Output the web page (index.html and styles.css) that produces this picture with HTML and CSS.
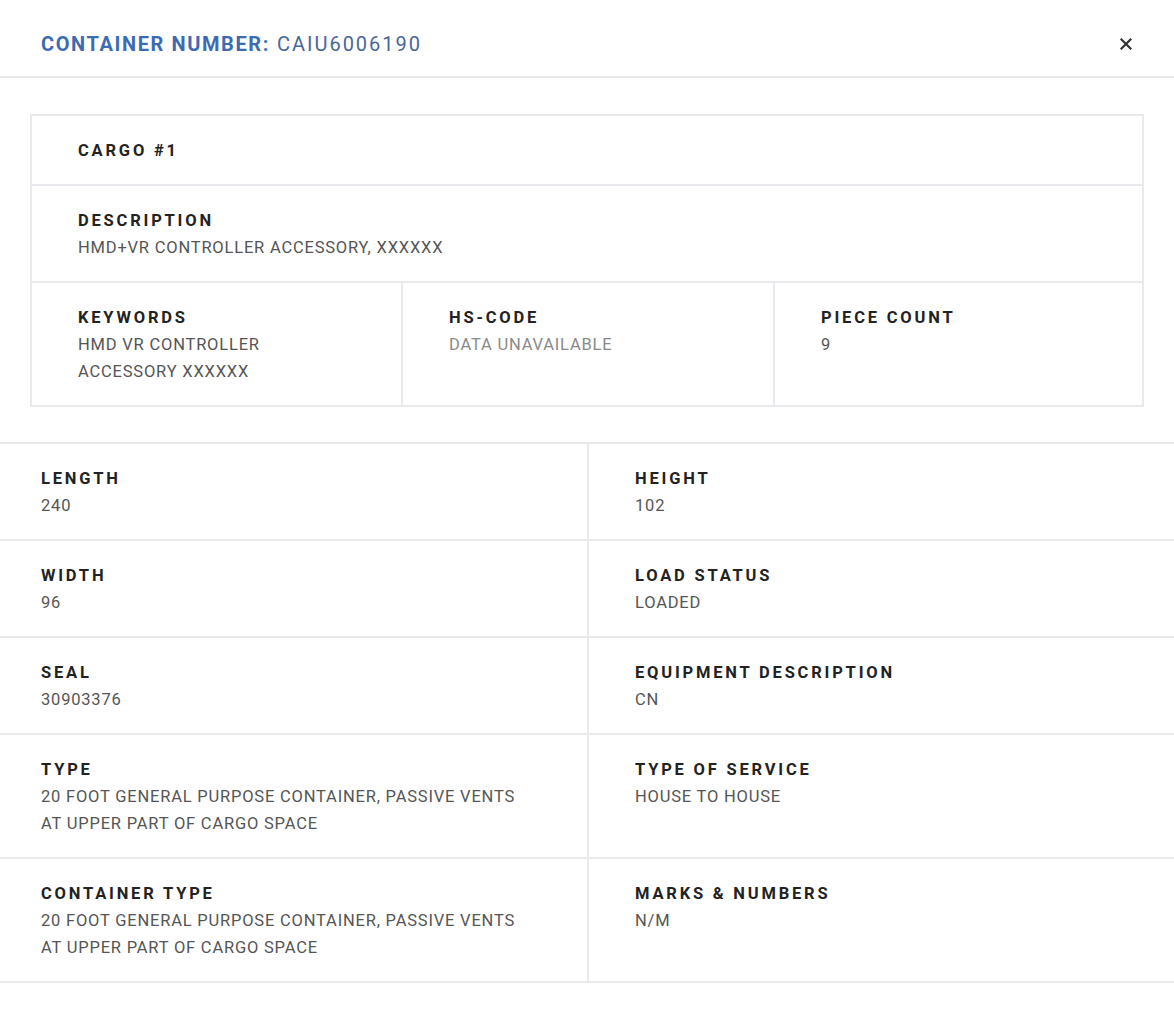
FILE: index.html
```html
<!DOCTYPE html>
<html lang="en">
<head>
    <meta charset="UTF-8">
    <meta name="viewport" content="width=device-width, initial-scale=1.0">
    <title>Container CAIU6006190</title>
    <link rel="stylesheet" href="styles.css">
</head>
<body>
    <div class="modal">
        <div class="modal-header">
            <div class="modal-title"><b>CONTAINER NUMBER:</b> CAIU6006190</div>
            <button class="close" type="button">
                <svg width="12" height="12" viewBox="0 0 12 12"><path d="M1.5 1.5l9 9M10.5 1.5l-9 9" stroke="#333" stroke-width="2.2" stroke-linecap="square"/></svg>
            </button>
        </div>

        <div class="cargo">
            <div class="cargo-row">
                <div class="cell">
                    <div class="label">CARGO #1</div>
                </div>
            </div>
            <div class="cargo-row">
                <div class="cell">
                    <div class="label">DESCRIPTION</div>
                    <div class="value">HMD+VR CONTROLLER ACCESSORY, XXXXXX</div>
                </div>
            </div>
            <div class="cargo-row thirds">
                <div class="cell">
                    <div class="label">KEYWORDS</div>
                    <div class="value">HMD VR CONTROLLER ACCESSORY XXXXXX</div>
                </div>
                <div class="cell">
                    <div class="label">HS-CODE</div>
                    <div class="value muted">DATA UNAVAILABLE</div>
                </div>
                <div class="cell">
                    <div class="label">PIECE COUNT</div>
                    <div class="value">9</div>
                </div>
            </div>
        </div>

        <div class="details">
            <div class="field">
                <div class="label">LENGTH</div>
                <div class="value">240</div>
            </div>
            <div class="field">
                <div class="label">HEIGHT</div>
                <div class="value">102</div>
            </div>
            <div class="field">
                <div class="label">WIDTH</div>
                <div class="value">96</div>
            </div>
            <div class="field">
                <div class="label">LOAD STATUS</div>
                <div class="value">LOADED</div>
            </div>
            <div class="field">
                <div class="label">SEAL</div>
                <div class="value">30903376</div>
            </div>
            <div class="field">
                <div class="label">EQUIPMENT DESCRIPTION</div>
                <div class="value">CN</div>
            </div>
            <div class="field">
                <div class="label">TYPE</div>
                <div class="value">20 FOOT GENERAL PURPOSE CONTAINER, PASSIVE VENTS AT UPPER PART OF CARGO SPACE</div>
            </div>
            <div class="field">
                <div class="label">TYPE OF SERVICE</div>
                <div class="value">HOUSE TO HOUSE</div>
            </div>
            <div class="field">
                <div class="label">CONTAINER TYPE</div>
                <div class="value">20 FOOT GENERAL PURPOSE CONTAINER, PASSIVE VENTS AT UPPER PART OF CARGO SPACE</div>
            </div>
            <div class="field">
                <div class="label">MARKS &amp; NUMBERS</div>
                <div class="value">N/M</div>
            </div>
        </div>
    </div>
</body>
</html>
```

FILE: styles.css
```css
html, body{
    margin : 0;
    padding : 0;
    background : #fff;
}
body{
    font-family: Roboto, "Noto Sans", sans-serif;
    color : #222;
}
.modal{
    width : 1174px;
    padding-bottom : 34px;
}
.modal-header{
    display : flex;
    justify-content: space-between;
    align-items: center;
    height : 78px;
    padding : 12px 41px 0;
    box-sizing: border-box;
    border-bottom : 2px solid #e8eaed;
}
.modal-title{
    font-size : 20px;
    letter-spacing: 2px;
    color : #47679a;
}
.modal-title b{
    font-weight : 700;
    letter-spacing: 1.6px;
    color : #3c6bb2;
}
.close{
    border : 0;
    background : none;
    padding : 0;
    margin-right : 1px;
    cursor : pointer;
    display : flex;
}

.label{
    font-size : 16.5px;
    font-weight : 700;
    letter-spacing: 2.8px;
    line-height: 27px;
    color : #222;
}
.value{
    font-size : 16.5px;
    letter-spacing: 0.8px;
    line-height: 27px;
    color : #555;
}
.value.muted{
    color : #8a8a8a;
}

.cargo{
    margin : 36px 30px 35px;
    border : 2px solid #e8eaed;
    border-bottom : 0;
}
.cargo-row{
    display : grid;
    grid-template-columns: 1fr;
    border-bottom : 2px solid #e8eaed;
}
.cargo-row.thirds{
    grid-template-columns: 369px 372px 1fr;
}
.cargo-row .cell{
    padding : 21px 46px 20px;
}
.cargo-row.thirds .cell + .cell{
    border-left : 2px solid #e8eaed;
}

.details{
    display : grid;
    grid-template-columns: 587px 1fr;
    border-top : 2px solid #e8eaed;
}
.field{
    padding : 21px 60px 20px 41px;
    border-bottom : 2px solid #e8eaed;
}
.field:nth-child(even){
    border-left : 2px solid #e8eaed;
    padding-left : 46px;
}
```
